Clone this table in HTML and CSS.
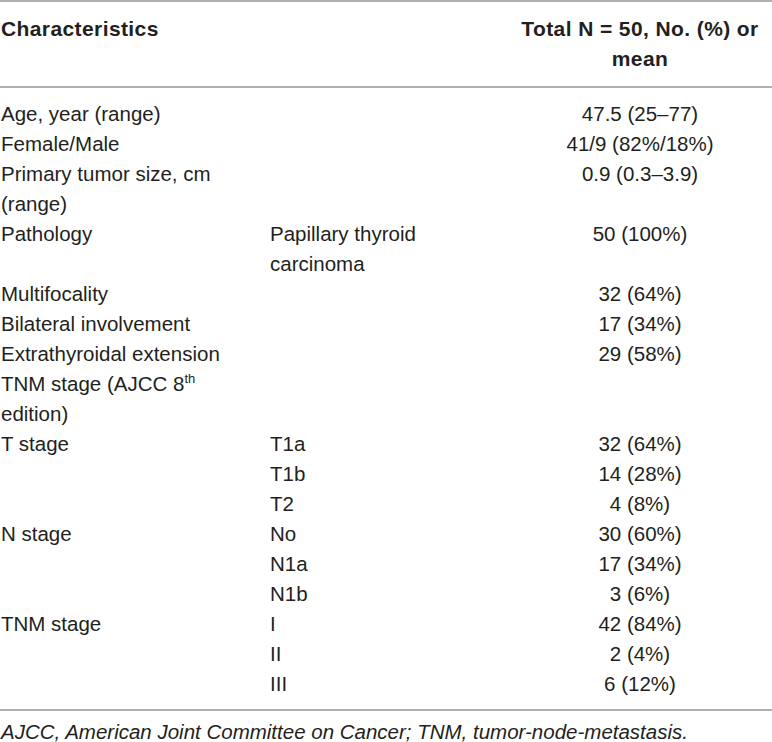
FILE: index.html
```html
<html lang="en">
<head>
    <meta charset="UTF-8">
    <meta name="viewport" content="width=device-width, initial-scale=1.0">
    <title>Patient characteristics</title>
    <link rel="stylesheet" href="styles.css">
</head>
<body>
    <table class="data-table">
        <colgroup>
            <col class="col-name">
            <col class="col-sub">
            <col class="col-value">
        </colgroup>
        <thead>
            <tr>
                <th class="name">Characteristics</th>
                <th></th>
                <th class="value">Total N = 50, No. (%) or mean</th>
            </tr>
        </thead>
        <tbody>
            <tr class="first">
                <td>Age, year (range)</td>
                <td></td>
                <td class="value">47.5 (25–77)</td>
            </tr>
            <tr>
                <td>Female/Male</td>
                <td></td>
                <td class="value">41/9 (82%/18%)</td>
            </tr>
            <tr>
                <td>Primary tumor size, cm (range)</td>
                <td></td>
                <td class="value">0.9 (0.3–3.9)</td>
            </tr>
            <tr>
                <td>Pathology</td>
                <td>Papillary thyroid carcinoma</td>
                <td class="value">50 (100%)</td>
            </tr>
            <tr>
                <td>Multifocality</td>
                <td></td>
                <td class="value">32 (64%)</td>
            </tr>
            <tr>
                <td>Bilateral involvement</td>
                <td></td>
                <td class="value">17 (34%)</td>
            </tr>
            <tr>
                <td>Extrathyroidal extension</td>
                <td></td>
                <td class="value">29 (58%)</td>
            </tr>
            <tr>
                <td>TNM stage (AJCC 8<sup>th</sup> edition)</td>
                <td></td>
                <td class="value"></td>
            </tr>
            <tr>
                <td>T stage</td>
                <td>T1a</td>
                <td class="value">32 (64%)</td>
            </tr>
            <tr>
                <td></td>
                <td>T1b</td>
                <td class="value">14 (28%)</td>
            </tr>
            <tr>
                <td></td>
                <td>T2</td>
                <td class="value">4 (8%)</td>
            </tr>
            <tr>
                <td>N stage</td>
                <td>No</td>
                <td class="value">30 (60%)</td>
            </tr>
            <tr>
                <td></td>
                <td>N1a</td>
                <td class="value">17 (34%)</td>
            </tr>
            <tr>
                <td></td>
                <td>N1b</td>
                <td class="value">3 (6%)</td>
            </tr>
            <tr>
                <td>TNM stage</td>
                <td>I</td>
                <td class="value">42 (84%)</td>
            </tr>
            <tr>
                <td></td>
                <td>II</td>
                <td class="value">2 (4%)</td>
            </tr>
            <tr class="last">
                <td></td>
                <td>III</td>
                <td class="value">6 (12%)</td>
            </tr>
        </tbody>
    </table>
    <p class="footnote">AJCC, American Joint Committee on Cancer; TNM, tumor-node-metastasis.</p>
</body>
</html>
```

FILE: styles.css
```css
body {
    margin: 0;
    background-color: #ffffff;
    color: #231f20;
    font-family: "Liberation Sans", Arial, sans-serif;
}

.data-table {
    width: 772px;
    border-collapse: collapse;
    table-layout: fixed;
    border-top: 2px solid #b0b0b0;
    border-bottom: 2px solid #b0b0b0;
}

.col-name {
    width: 270px;
}

.col-sub {
    width: 238px;
}

.col-value {
    width: 264px;
}

thead tr {
    border-bottom: 2px solid #b0b0b0;
}

th {
    font-size: 21px;
    font-weight: bold;
    letter-spacing: 0.4px;
    line-height: 30px;
    padding: 12px 0 12px 0;
    vertical-align: top;
}

th.name {
    text-align: left;
    padding-left: 1px;
}

td {
    font-size: 20.5px;
    line-height: 30px;
    padding: 0 20px 0 0;
    vertical-align: top;
}

td:first-child {
    padding-left: 1px;
}

.value {
    text-align: center;
    padding-right: 0;
}

tr.first td {
    padding-top: 11px;
}

tr.last td {
    padding-bottom: 10px;
}

sup {
    font-size: 13px;
    line-height: 0;
}

.footnote {
    margin: 6px 0 0 0;
    font-size: 20.5px;
    font-style: italic;
    line-height: 30px;
    padding-left: 1px;
}
```
